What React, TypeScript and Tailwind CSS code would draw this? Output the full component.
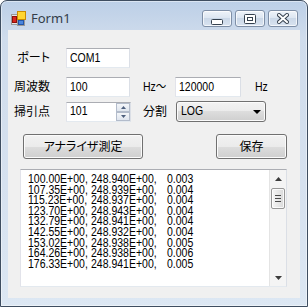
import React from 'react'

const lines = [
  ['100.00E+00,', '248.940E+00,', '0.003'],
  ['107.35E+00,', '248.939E+00,', '0.004'],
  ['115.23E+00,', '248.937E+00,', '0.004'],
  ['123.70E+00,', '248.943E+00,', '0.004'],
  ['132.79E+00,', '248.941E+00,', '0.004'],
  ['142.55E+00,', '248.932E+00,', '0.004'],
  ['153.02E+00,', '248.938E+00,', '0.005'],
  ['164.26E+00,', '248.938E+00,', '0.006'],
  ['176.33E+00,', '248.941E+00,', '0.005'],
]

// Win7 look-alikes
const tbBorder = 'bg-white border border-[#abadb3] border-l-[#e2e3ea] border-r-[#dbdfe6] border-b-[#e3e9ef]'
const btnFace =
  'rounded-[3px] border border-[#707070] bg-[linear-gradient(#f2f2f2,#ebebeb_50%,#dddddd_50%,#cfcfcf)] shadow-[inset_0_0_0_1px_#fbfbfb]'
// the form font is narrow (MS UI Gothic), squeeze Liberation Sans a bit
const narrow = 'inline-block origin-left scale-x-[0.84]'

export default function App() {
  return (
    <div className="w-[308px] h-[307px] flex flex-col rounded-t-[7px] border border-[#3e4d60] bg-[linear-gradient(#bccfe7,#cfdcec_12%,#d6e1ef_60%,#dce7f3)] shadow-[inset_0_0_0_1px_rgba(255,255,255,0.45)] font-['Liberation_Sans','Noto_Sans_CJK_JP',sans-serif] [font-feature-settings:'palt'] text-[12.5px] text-black">
      <TitleBar />

      {/* client area */}
      <div className="mx-[7px] mb-[8px] flex-1 bg-[#f0f0f0] flex flex-col pt-[18px]">
        <div className="flex items-center h-[20px]">
          <Label text="ポート" />
          <TextBox value="COM1" className="w-[64px]" />
        </div>

        <div className="flex items-center h-[20px] mt-[9px]">
          <Label text="周波数" />
          <TextBox value="100" className="w-[64px]" />
          <span className="w-[45px] pl-[13px]">
            <span className={narrow}>Hz～</span>
          </span>
          <TextBox value="120000" className="w-[66px]" />
          <span className="pl-[14px]">
            <span className={narrow}>Hz</span>
          </span>
        </div>

        <div className="flex items-center h-[21px] mt-[4px]">
          <Label text="掃引点" />
          <NumericUpDown value="101" />
          <span className="w-[45px] pl-[12px] text-[12px]">分割</span>
          <div className={`w-[90px] h-[21px] ${btnFace} flex items-center justify-between pl-[4px] pr-[4px]`}>
            <span className={narrow}>LOG</span>
            <svg width="8" height="4" viewBox="0 0 8 4">
              <path d="M0 0h8L4 4z" fill="#000" />
            </svg>
          </div>
        </div>

        <div className="flex justify-between pl-[15px] pr-[13px] mt-[12px] text-[12px]">
          <div className={`w-[120px] h-[25px] ${btnFace} flex items-center justify-center`}>アナライザ測定</div>
          <div className={`w-[71px] h-[25px] ${btnFace} flex items-center justify-center`}>保存</div>
        </div>

        <div className={`ml-[12px] mt-[10px] w-[267px] h-[118px] ${tbBorder} flex`}>
          <div className="flex-1 pl-[7px] pt-[4px] leading-[10.6px]">
            <div className="origin-top-left scale-x-[0.84]">
              {lines.map((l, i) => (
                <div key={i} className="flex whitespace-nowrap">
                  <span className="w-[75px]">{l[0]}</span>
                  <span className="w-[90.5px]">{l[1]}</span>
                  <span>{l[2]}</span>
                </div>
              ))}
            </div>
          </div>
          <ScrollBar />
        </div>
      </div>
    </div>
  )
}

function TitleBar() {
  return (
    <div className="h-[29px] pt-[6px] pl-[10px] pr-[9px] flex items-center">
      <svg width="15" height="15" viewBox="0 0 15 15">
        <rect x="0.5" y="3.5" width="6" height="10" fill="#e6e6e6" stroke="#9a9a9a" />
        <rect x="1.5" y="5.5" width="4" height="6" fill="#d8261c" stroke="#8e0f0b" />
        <rect x="6.5" y="8.5" width="7" height="6" fill="#e6e6e6" stroke="#9a9a9a" />
        <rect x="7.5" y="9.5" width="5" height="4" fill="#4a86de" stroke="#2356a8" />
        <rect x="6.5" y="0.5" width="8" height="8" fill="#ffd530" stroke="#c98b00" />
      </svg>
      <span className="ml-[5px] font-['Noto_Sans',sans-serif] text-[13px] text-[#333c48]">Form1</span>
      <div className="ml-auto flex gap-[3px]">
        <CaptionButton>
          <svg width="12" height="6" viewBox="0 0 12 6" className="mt-[7px]">
            <rect x="0.5" y="0.5" width="11" height="5" rx="1" fill="#fff" stroke="#35414f" />
          </svg>
        </CaptionButton>
        <CaptionButton>
          <svg width="12" height="10" viewBox="0 0 12 10">
            <rect x="0.5" y="0.5" width="11" height="9" rx="1" fill="#fff" stroke="#35414f" />
            <rect x="3.5" y="3.5" width="5" height="3" fill="#fff" stroke="#35414f" />
          </svg>
        </CaptionButton>
        <CaptionButton>
          <svg width="12" height="11" viewBox="0 0 12 11">
            <path d="M2 2l8 7M10 2l-8 7" stroke="#35414f" strokeWidth="4" strokeLinecap="square" />
            <path d="M2 2l8 7M10 2l-8 7" stroke="#fff" strokeWidth="2" strokeLinecap="square" />
          </svg>
        </CaptionButton>
      </div>
    </div>
  )
}

function CaptionButton({ children }: { children: React.ReactNode }) {
  return (
    <div className="w-[30px] h-[17px] rounded-[3px] border border-[#7e8fa7] bg-[linear-gradient(#eef3f9,#dbe5f1_50%,#cbd8e8_50%,#d8e3f0)] shadow-[inset_0_0_0_1px_rgba(255,255,255,0.7)] flex items-center justify-center">
      {children}
    </div>
  )
}

function Label({ text }: { text: string }) {
  return <span className="w-[42px] mr-[16px] text-right text-[12px]">{text}</span>
}

function TextBox({ value, className }: { value: string; className?: string }) {
  return (
    <div className={`h-[20px] ${tbBorder} flex items-center pl-[3px] ${className ?? ''}`}>
      <span className={narrow}>{value}</span>
    </div>
  )
}

function NumericUpDown({ value }: { value: string }) {
  return (
    <div className={`w-[65px] h-[20px] ${tbBorder} flex`}>
      <span className="flex-1 pl-[3px] flex items-center">
        <span className={narrow}>{value}</span>
      </span>
      <div className="w-[14px] flex flex-col">
        <SpinButton up />
        <SpinButton />
      </div>
    </div>
  )
}

function SpinButton({ up }: { up?: boolean }) {
  return (
    <div className="flex-1 border border-[#b3bccb] bg-[linear-gradient(#f4f6f9,#dfe5ee)] flex items-center justify-center">
      <svg width="5" height="3" viewBox="0 0 5 3">
        <path d={up ? 'M0 3h5L2.5 0z' : 'M0 0h5L2.5 3z'} fill="#4d5f7d" />
      </svg>
    </div>
  )
}

function ScrollBar() {
  return (
    <div className="w-[17px] border-l border-[#e4e4e4] bg-[#f4f4f4] flex flex-col items-center">
      <div className="h-[17px] flex items-center justify-center">
        <svg width="7" height="4" viewBox="0 0 7 4">
          <path d="M0 4h7L3.5 0z" fill="#3c3c3c" />
        </svg>
      </div>
      <div className="mt-[1px] w-[14px] h-[21px] rounded-[2px] border border-[#979797] bg-[linear-gradient(90deg,#f5f5f5,#e8e8e8_50%,#d9d9d9)] shadow-[inset_0_0_0_1px_rgba(255,255,255,0.8)] flex flex-col items-center justify-center gap-[2px]">
        <div className="w-[6px] h-[1px] bg-[#4a4a4a]" />
        <div className="w-[6px] h-[1px] bg-[#4a4a4a]" />
        <div className="w-[6px] h-[1px] bg-[#4a4a4a]" />
      </div>
      <div className="mt-auto h-[17px] flex items-center justify-center">
        <svg width="7" height="4" viewBox="0 0 7 4">
          <path d="M0 0h7L3.5 4z" fill="#3c3c3c" />
        </svg>
      </div>
    </div>
  )
}
